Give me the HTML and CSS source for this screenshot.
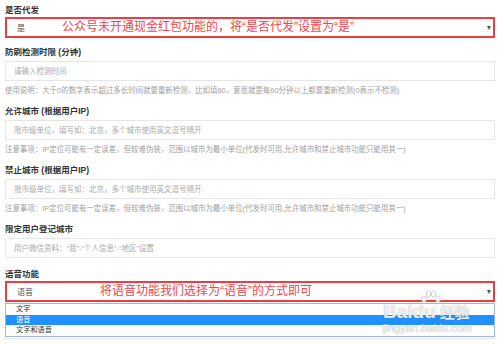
FILE: index.html
```html
<!DOCTYPE html>
<html lang="zh-CN">
<head>
<meta charset="utf-8">
<link rel="stylesheet" href="styles.css">
<title>高级设置</title>
</head>
<body>
<div class="form">
  <div class="group">
    <label class="label tight">是否代发</label>
    <div class="field">
      <div class="select marked">
        <span class="value">是</span>
        <span class="note note-first">公众号未开通现金红包功能的，将“是否代发”设置为“是”</span>
        <span class="arrow"></span>
      </div>
    </div>
  </div>

  <div class="group">
    <label class="label">防刷检测时限 (分钟)</label>
    <input class="input" type="text" placeholder="请输入检测时间">
    <div class="help">使用说明：大于0的数字表示超过多长时间就要重新检测，比如填60，意思就是每60分钟以上都要重新检测(0表示不检测)</div>
  </div>

  <div class="group">
    <label class="label">允许城市 (根据用户IP)</label>
    <input class="input" type="text" placeholder="限市级单位，填写如：北京，多个城市使用英文逗号隔开">
    <div class="help">注意事项：IP定位可能有一定误差，但较难伪装，范围以城市为最小单位(代发时可用,允许城市和禁止城市功能只能用其一)</div>
  </div>

  <div class="group">
    <label class="label">禁止城市 (根据用户IP)</label>
    <input class="input" type="text" placeholder="限市级单位，填写如：北京，多个城市使用英文逗号隔开">
    <div class="help">注意事项：IP定位可能有一定误差，但较难伪装，范围以城市为最小单位(代发时可用,允许城市和禁止城市功能只能用其一)</div>
  </div>

  <div class="group plain">
    <label class="label">限定用户登记城市</label>
    <input class="input" type="text" placeholder="用户微信资料：“我”-“个人信息”-“地区”设置">
  </div>

  <div class="group">
    <label class="label tight">语音功能</label>
    <div class="field">
      <div class="select marked">
        <span class="value">语音</span>
        <span class="note note-second">将语音功能我们选择为“语音”的方式即可</span>
        <span class="arrow"></span>
      </div>
      <div class="list">
        <div class="option">文字</div>
        <div class="option active">语音</div>
        <div class="option">文字和语音</div>
      </div>
    </div>
  </div>

  <div class="group">
    <div class="select under">
      <span class="value">否</span>
      <span class="arrow"></span>
    </div>
  </div>
</div>

<div class="watermark">
  <svg class="paw" width="22" height="14" viewBox="0 0 22 14">
    <ellipse cx="4" cy="9" rx="2.2" ry="3" />
    <ellipse cx="8.5" cy="4" rx="2.2" ry="3" />
    <ellipse cx="13.5" cy="4" rx="2.2" ry="3" />
    <ellipse cx="18" cy="9" rx="2.2" ry="3" />
  </svg>
  <div class="brand"><span class="brand-en">Baidu</span><span class="brand-cn">经验</span></div>
  <div class="url">jingyan.baidu.com</div>
</div>
</body>
</html>
```

FILE: styles.css
```css
html {
  font-family: "Liberation Sans", "Noto Sans CJK SC", sans-serif;
  background-color: white;
  color: #333;
}
body {
  margin: 0;
  padding: 4px 5px 0;
  height: 344px;
  box-sizing: border-box;
  overflow: hidden;
  position: relative;
}
.group {
  margin-bottom: 8px;
}
.group.plain {
  margin-bottom: 10px;
}
.label {
  display: block;
  font-size: 8.5px;
  font-weight: 700;
  line-height: 12px;
  margin-bottom: 3px;
}
.label.tight {
  margin-bottom: 1px;
}
.input {
  display: block;
  box-sizing: border-box;
  width: 100%;
  height: 20px;
  margin: 0;
  padding: 0 8px;
  border: 1px solid #e6e6e6;
  outline: none;
  font-family: "Liberation Sans", "Noto Sans CJK SC", sans-serif;
  font-size: 7.5px;
  color: #555;
}
.input::placeholder {
  color: #aaa;
}
.help {
  margin-top: 3px;
  font-size: 7.45px;
  line-height: 13px;
  color: #a0a0a0;
  white-space: nowrap;
}
.field {
  position: relative;
}
.select {
  display: flex;
  align-items: center;
  position: relative;
  box-sizing: border-box;
  height: 20px;
  padding: 0 4px 0 11px;
  border: 1px solid #e6e6e6;
  font-size: 8px;
  color: #555;
}
.select.marked {
  height: 21px;
  padding: 0 2px 0 10px;
  border: 2px solid #ee3b44;
}
.select.under {
  margin-top: 17px;
}
.arrow {
  margin-left: auto;
  border-top: 4px solid #555;
  border-left: 2.5px solid transparent;
  border-right: 2.5px solid transparent;
}
.note {
  position: absolute;
  top: 0;
  line-height: 17px;
  font-size: 12px;
  color: #f04650;
  white-space: nowrap;
}
.note-first {
  left: 55px;
}
.note-second {
  left: 93px;
}
.list {
  position: absolute;
  top: 100%;
  left: 0;
  right: 0;
  margin-top: 1px;
  border: 1px solid #9db8e6;
  background-color: white;
  font-size: 7.2px;
  z-index: 2;
}
.option {
  height: 10.5px;
  line-height: 10.5px;
  padding-left: 10px;
  color: #333;
}
.option.active {
  background-color: #1e90ff;
  color: white;
}
.watermark {
  position: absolute;
  left: 383px;
  top: 302px;
  z-index: 3;
  color: rgba(255, 255, 255, 0.85);
  text-shadow: 0 0 1px rgba(120, 120, 120, 0.8);
  white-space: nowrap;
}
.paw {
  position: absolute;
  left: 37px;
  top: -12px;
  fill: rgba(255, 255, 255, 0.85);
  stroke: #cfcfcf;
  stroke-width: 1;
}
.brand {
  line-height: 19px;
}
.brand-en {
  font-size: 19px;
  font-weight: 700;
}
.brand-cn {
  margin-left: 4px;
  font-size: 15px;
  font-weight: 700;
}
.url {
  font-size: 11px;
  line-height: 12px;
}
```
